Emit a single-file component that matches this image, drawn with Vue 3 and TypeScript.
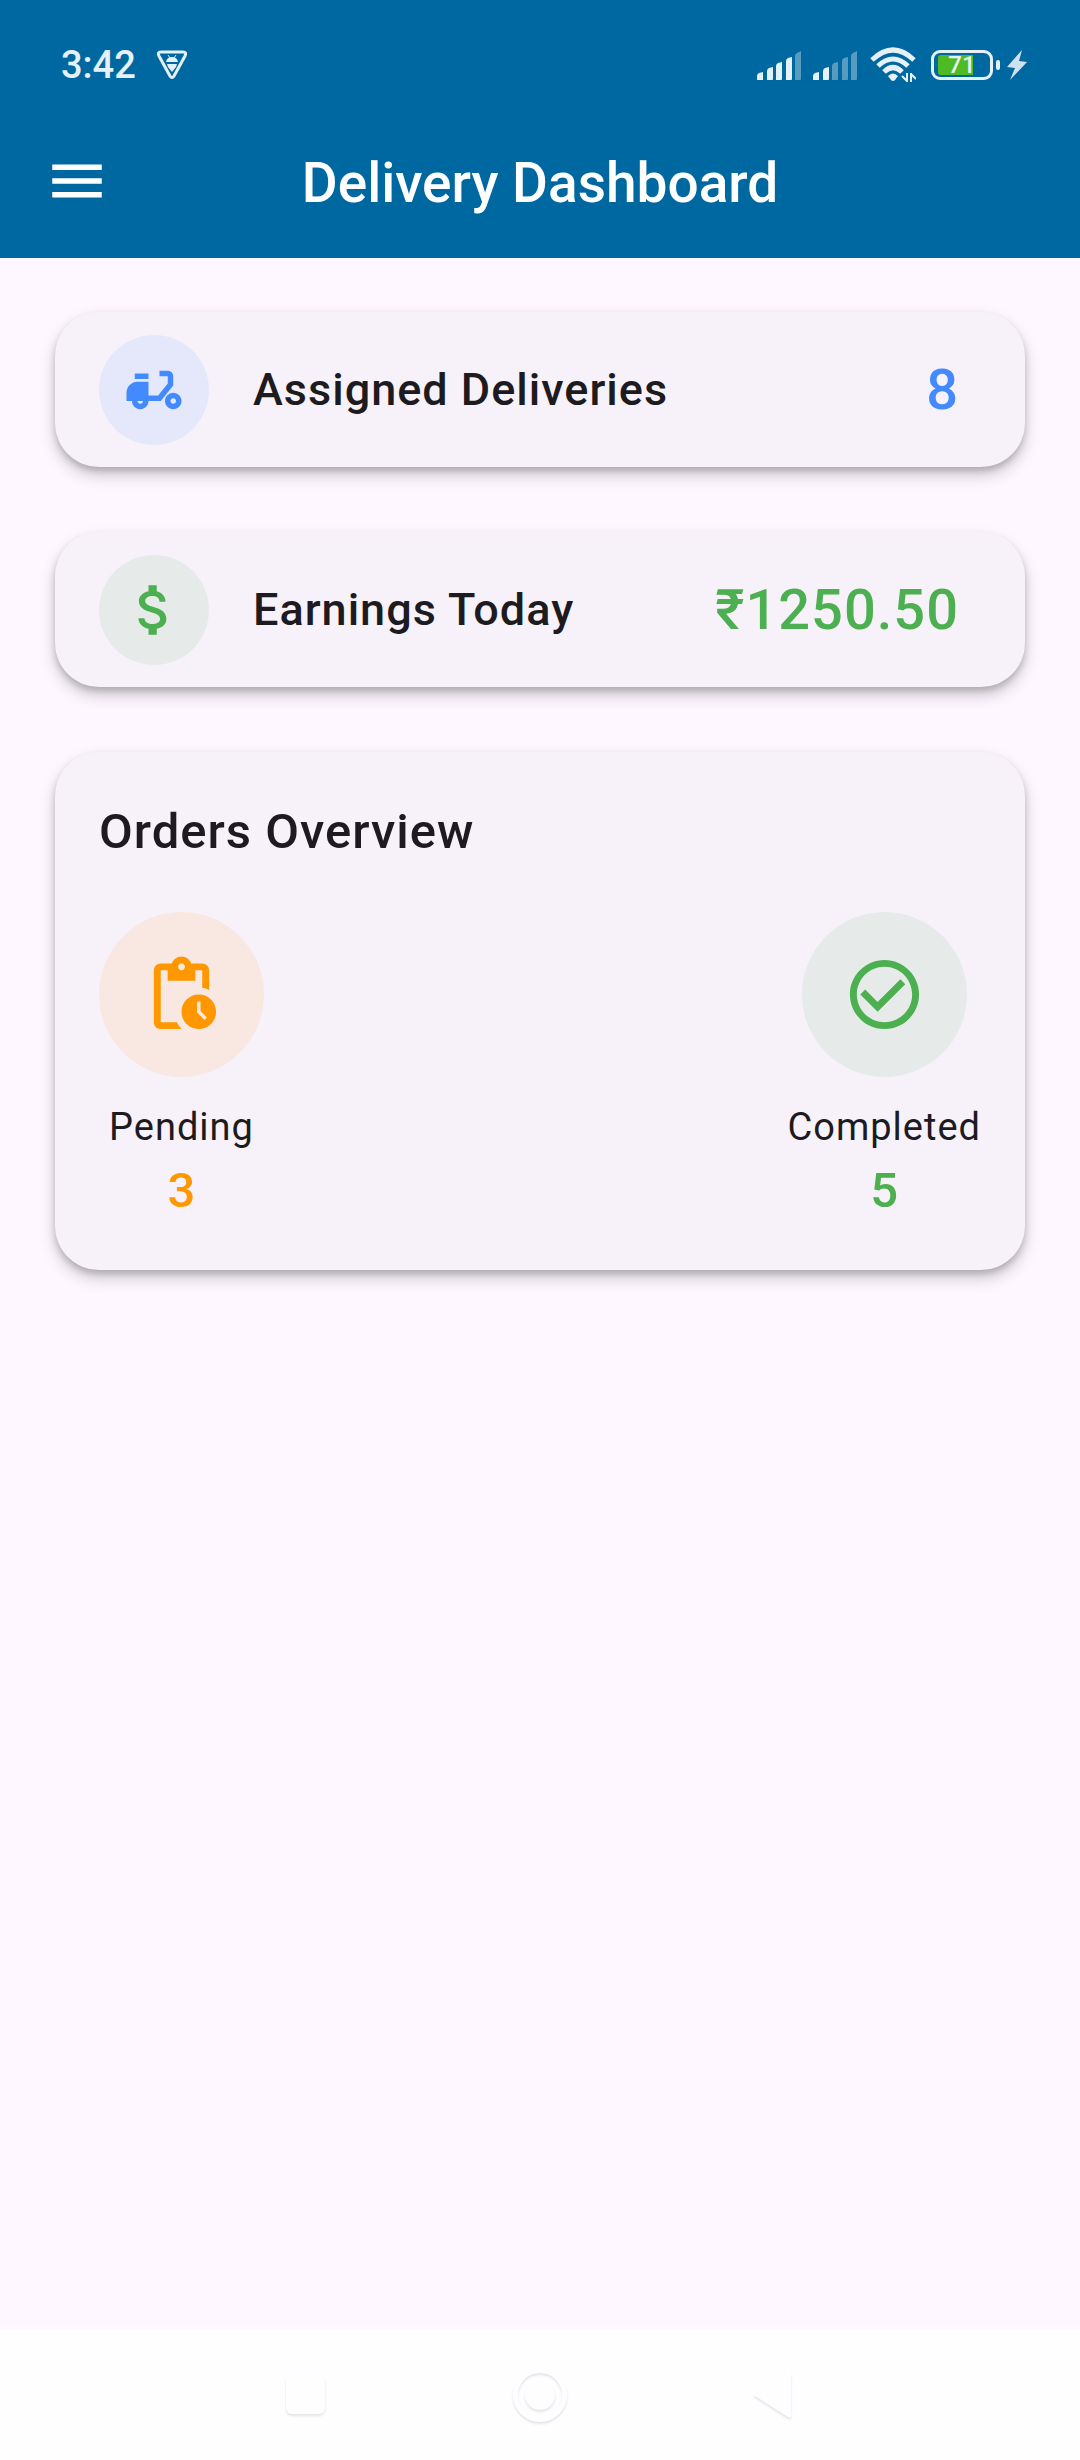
<script setup lang="ts">
interface Stat {
  label: string
  value: string
  tone: 'blue' | 'green' | 'orange'
  icon: string
}

const summary: Stat[] = [
  {
    label: 'Assigned Deliveries',
    value: '8',
    tone: 'blue',
    icon: 'M19 7c0-1.1-.9-2-2-2h-3v2h3v2.65L13.52 14H10V9H6c-2.21 0-4 1.79-4 4v3h2c0 1.66 1.34 3 3 3s3-1.34 3-3h4.48L19 10.35V7zM7 17c-.55 0-1-.45-1-1h2c0 .55-.45 1-1 1zM5 6h5v2H5zM19 13c-1.66 0-3 1.34-3 3s1.34 3 3 3 3-1.34 3-3-1.34-3-3-3zm0 4c-.55 0-1-.45-1-1s.45-1 1-1 1 .45 1 1-.45 1-1 1z',
  },
  {
    label: 'Earnings Today',
    value: '₹1250.50',
    tone: 'green',
    icon: 'M11.8 10.9c-2.27-.59-3-1.2-3-2.15 0-1.09 1.01-1.85 2.7-1.85 1.78 0 2.44.85 2.5 2.1h2.21c-.07-1.72-1.12-3.3-3.21-3.81V3h-3v2.16c-1.94.42-3.5 1.68-3.5 3.61 0 2.31 1.91 3.46 4.7 4.13 2.5.6 3 1.48 3 2.41 0 .69-.49 1.79-2.7 1.79-2.06 0-2.87-.92-2.98-2.1h-2.2c.12 2.19 1.76 3.42 3.68 3.83V21h3v-2.15c1.95-.37 3.5-1.5 3.5-3.55 0-2.84-2.43-3.81-4.7-4.4z',
  },
]

const orders: Stat[] = [
  {
    label: 'Pending',
    value: '3',
    tone: 'orange',
    icon: 'M17 12c-2.76 0-5 2.24-5 5s2.24 5 5 5 5-2.24 5-5-2.24-5-5-5zm1.65 7.35L16.5 17.2V14h1v2.79l1.85 1.85-.7.71zM18 3h-3.18C14.4 1.84 13.3 1 12 1s-2.4.84-2.82 2H6c-1.1 0-2 .9-2 2v15c0 1.1.9 2 2 2h6.11c-.59-.57-1.07-1.25-1.42-2H6V5h2v3h8V5h2v5.08c.71.1 1.38.31 2 .6V5c0-1.1-.9-2-2-2zm-6 2c-.55 0-1-.45-1-1s.45-1 1-1 1 .45 1 1-.45 1-1 1z',
  },
  {
    label: 'Completed',
    value: '5',
    tone: 'green',
    icon: 'M16.59 7.58L10 14.17l-3.59-3.58L5 12l5 5 8-8zM12 2C6.48 2 2 6.48 2 12s4.48 10 10 10 10-4.48 10-10S17.52 2 12 2zm0 18c-4.42 0-8-3.58-8-8s3.58-8 8-8 8 3.58 8 8-3.58 8-8 8z',
  },
]

const bars = [
  'M0 29v-4q0-2 2-3l4-1v8z',
  'M10 29v-9q0-2 2-3l4-1v12q0 1-1 1z',
  'M19 29v-14q0-2 2-3l4-1v17q0 1-1 1z',
  'M29 29v-19q0-2 2-3l4-1v22q0 1-1 1z',
  'M38 29v-24q0-2 2-3l4-2v28q0 1-1 1z',
]
const signals = [4, 2]
</script>

<template>
  <div class="screen">
    <header class="top">
      <div class="status">
        <span class="time">3:42</span>
        <svg class="shield" width="32" height="30" viewBox="0 0 32 30" aria-hidden="true">
          <path d="M5 2h22q4 0 2 4L18 26q-2 3-4 0L3 6q-2-4 2-4z" fill="none" stroke="currentColor" stroke-width="3" />
          <path d="M10 12q1-5 6-5t6 5zM11 14h10l-1 3-4 5-4-5z" fill="currentColor" />
          <path d="M12 5l2 3M20 5l-2 3" stroke="currentColor" stroke-width="1" />
        </svg>
        <div class="signals">
          <svg v-for="(level, s) in signals" :key="s" width="44" height="29" viewBox="0 0 44 29" aria-hidden="true">
            <path v-for="(bar, i) in bars" :key="i" :d="bar" fill="currentColor" :opacity="i < level ? 1 : 0.38" />
          </svg>
        </div>
        <svg class="wifi" width="46" height="36" viewBox="0 0 46 36" aria-hidden="true">
          <g fill="none" stroke="currentColor" stroke-width="5">
            <path d="M2 13Q23-7 44 13" />
            <path d="M8 19Q23 5 38 19" />
            <path d="M14 25Q23 16 32 25" />
          </g>
          <path d="M18 29q5-5 10 0l-3 4q-2 2-4 0z" fill="currentColor" />
          <path d="M37 26v9M37 34l-5-5M41 35v-9M41 27l5 5" fill="none" stroke="currentColor" stroke-width="2" />
        </svg>
        <div class="battery">
          <div class="cell"><span class="charge"></span><span class="percent">71</span></div>
          <span class="cap"></span>
        </div>
        <svg class="bolt" width="20" height="30" viewBox="0 0 20 30" aria-hidden="true">
          <path d="M15 0L0 17l8 1-5 12L20 12l-8-1z" fill="currentColor" />
        </svg>
      </div>
      <div class="bar">
        <button class="menu" type="button" aria-label="Open menu">
          <svg width="66" height="66" viewBox="0 0 24 24"><path d="M3 18h18v-2H3v2zm0-5h18v-2H3v2zm0-7v2h18V6H3z" fill="currentColor" /></svg>
        </button>
        <h1>Delivery Dashboard</h1>
      </div>
    </header>

    <main>
      <section v-for="item in summary" :key="item.label" class="card row" :class="item.tone">
        <span class="disc small">
          <svg width="66" height="66" viewBox="0 0 24 24" aria-hidden="true"><path :d="item.icon" fill="currentColor" /></svg>
        </span>
        <span class="label">{{ item.label }}</span>
        <span class="amount">{{ item.value }}</span>
      </section>

      <section class="card overview">
        <h2>Orders Overview</h2>
        <div class="orders">
          <div v-for="item in orders" :key="item.label" class="order" :class="item.tone">
            <span class="disc large">
              <svg width="83" height="83" viewBox="0 0 24 24" aria-hidden="true"><path :d="item.icon" fill="currentColor" /></svg>
            </span>
            <span class="caption">{{ item.label }}</span>
            <span class="count">{{ item.value }}</span>
          </div>
        </div>
      </section>
    </main>

    <nav class="system">
      <button type="button" aria-label="Recent apps">
        <svg width="66" height="66" viewBox="0 0 66 66"><rect x="13" y="13" width="39" height="39" rx="6" fill="currentColor" /></svg>
      </button>
      <button type="button" aria-label="Home">
        <svg width="66" height="66" viewBox="0 0 66 66">
          <circle cx="33" cy="33" r="24.5" fill="none" stroke="currentColor" stroke-width="5" />
          <circle cx="33" cy="33" r="15" fill="currentColor" />
        </svg>
      </button>
      <button type="button" aria-label="Back">
        <svg width="66" height="66" viewBox="0 0 66 66"><path d="M50 12v41q0 3-3 2L14 34q-1-1 0-2L47 11q3-2 3 1z" fill="currentColor" /></svg>
      </button>
    </nav>
  </div>
</template>

<style>
body {
  margin: 0;
  background: #fef7ff;
}
</style>

<style scoped>
.screen {
  display: flex;
  flex-direction: column;
  min-height: 100vh;
  font-family: Roboto, "Liberation Sans", sans-serif;
  color: #1d1b20;
}

svg {
  display: block;
}

button {
  display: flex;
  margin: 0;
  padding: 0;
  border: 0;
  background: none;
  color: inherit;
}

.top {
  background: #0068a1;
  color: #fff;
}

.status {
  display: flex;
  align-items: center;
  height: 78px;
  padding: 26px 53px 0 61px;
  color: #e6f0f7;
}

.time {
  font-size: 38px;
  font-weight: 500;
  line-height: 44px;
}

.shield {
  margin-left: 20px;
}

.signals {
  display: flex;
  gap: 12px;
  margin-left: auto;
}

.wifi {
  margin-left: 13px;
}

.battery {
  display: flex;
  align-items: center;
  gap: 3px;
  margin: 0 7px 0 15px;
}

.cell {
  position: relative;
  box-sizing: border-box;
  width: 62px;
  height: 30px;
  border: 3px solid currentColor;
  border-radius: 9px;
}

.charge {
  position: absolute;
  top: 2px;
  bottom: 2px;
  left: 4px;
  width: 35px;
  border-radius: 3px 0 0 3px;
  background: #4fbb24;
}

.percent {
  position: relative;
  display: block;
  text-align: center;
  font-size: 24px;
  font-weight: 500;
  line-height: 24px;
}

.cap {
  width: 4px;
  height: 10px;
  border-radius: 2px;
  background: currentColor;
}

.bolt {
  opacity: 0.9;
}

.bar {
  display: grid;
  grid-template-columns: 66px 1fr 66px;
  align-items: center;
  height: 154px;
  padding: 0 44px;
}

h1 {
  margin: 0;
  padding-top: 3px;
  text-align: center;
  font-size: 55px;
  font-weight: 500;
  line-height: 64px;
}

main {
  display: flex;
  flex: 1;
  flex-direction: column;
  gap: 65px;
  padding: 54px 55px;
}

.card {
  border-radius: 44px;
  background: #f7f2fa;
  box-shadow: 0 8px 16px rgba(0, 0, 0, 0.2), 0 4px 6px rgba(0, 0, 0, 0.16);
}

.row {
  display: flex;
  align-items: center;
  padding: 23px 66px 22px 44px;
}

.disc {
  display: flex;
  align-items: center;
  justify-content: center;
  border-radius: 50%;
}

.small {
  width: 110px;
  height: 110px;
}

.large {
  width: 165px;
  height: 165px;
}

.blue .disc,
.blue .amount {
  color: #448aff;
}

.green .disc,
.green .amount,
.green .count {
  color: #4caf50;
}

.orange .disc,
.orange .count {
  color: #ff9800;
}

.blue .disc {
  background: #e5e8fb;
}

.green .disc {
  background: #e6ebe9;
}

.orange .disc {
  background: #f9e8e1;
}

.label {
  flex: 1;
  margin-left: 44px;
  font-size: 45px;
  font-weight: 500;
  line-height: 64px;
  letter-spacing: 1px;
}

.amount {
  font-size: 56px;
  font-weight: 500;
  line-height: 64px;
  letter-spacing: 1px;
}

.overview {
  padding: 44px;
}

h2 {
  margin: 0;
  font-size: 49px;
  font-weight: 500;
  line-height: 72px;
  letter-spacing: 1px;
}

.orders {
  display: flex;
  justify-content: space-between;
  margin-top: 44px;
}

.order {
  display: flex;
  flex-direction: column;
  align-items: center;
}

.caption {
  margin-top: 22px;
  font-size: 38px;
  line-height: 56px;
  letter-spacing: 1px;
}

.count {
  font-size: 49px;
  font-weight: 500;
  line-height: 71px;
}

.system {
  display: flex;
  justify-content: center;
  gap: 168px;
  padding: 32px 0;
  background: #fefdff;
  color: #fefeff;
}

.system svg {
  filter: drop-shadow(0 2px 1px rgba(0, 0, 0, 0.1));
}
</style>
